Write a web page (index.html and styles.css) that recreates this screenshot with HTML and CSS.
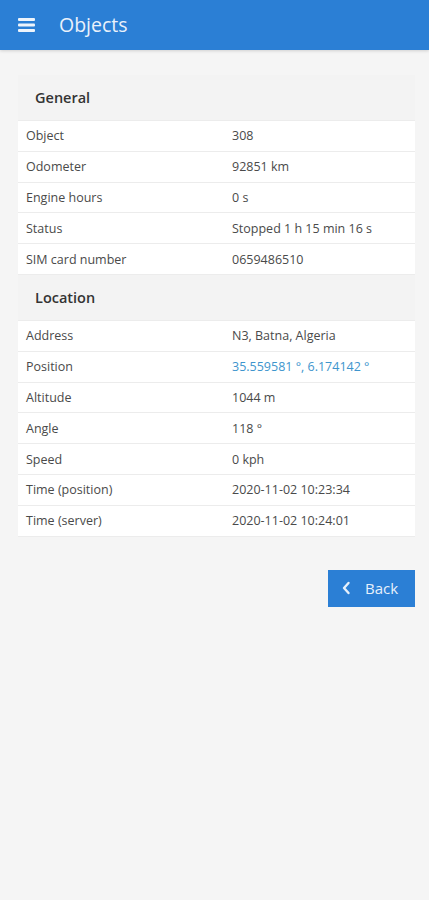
FILE: index.html
```html
<!DOCTYPE html>
<html>
<head>
<meta charset="utf-8">
<link rel="stylesheet" href="styles.css">
</head>
<body>
<header class="topbar">
  <svg class="menu-icon" width="17" height="14" viewBox="0 0 17 14"><rect x="0" y="0" width="17" height="3" rx="1"/><rect x="0" y="5.5" width="17" height="3" rx="1"/><rect x="0" y="11" width="17" height="3" rx="1"/></svg>
  <span class="title">Objects</span>
</header>
<main class="content">
  <section class="card">
    <div class="section-head">General</div>
    <div class="row"><span class="label">Object</span><span class="value">308</span></div>
    <div class="row"><span class="label">Odometer</span><span class="value">92851 km</span></div>
    <div class="row"><span class="label">Engine hours</span><span class="value">0 s</span></div>
    <div class="row"><span class="label">Status</span><span class="value">Stopped 1 h 15 min 16 s</span></div>
    <div class="row"><span class="label">SIM card number</span><span class="value">0659486510</span></div>
    <div class="section-head">Location</div>
    <div class="row"><span class="label">Address</span><span class="value">N3, Batna, Algeria</span></div>
    <div class="row"><span class="label">Position</span><span class="value link">35.559581 °, 6.174142 °</span></div>
    <div class="row"><span class="label">Altitude</span><span class="value">1044 m</span></div>
    <div class="row"><span class="label">Angle</span><span class="value">118 °</span></div>
    <div class="row"><span class="label">Speed</span><span class="value">0 kph</span></div>
    <div class="row"><span class="label">Time (position)</span><span class="value">2020-11-02 10:23:34</span></div>
    <div class="row"><span class="label">Time (server)</span><span class="value">2020-11-02 10:24:01</span></div>
  </section>
  <div class="actions">
    <button class="back-btn">
      <svg width="10" height="14" viewBox="0 0 10 14"><path d="M7.5 2 L3 7 L7.5 12" fill="none" stroke="currentColor" stroke-width="2.4" stroke-linecap="round" stroke-linejoin="round"/></svg>
      <span>Back</span>
    </button>
  </div>
</main>
</body>
</html>
```

FILE: styles.css
```css
* { box-sizing: border-box; }
html, body { margin: 0; padding: 0; }
body {
  background: #f5f5f5;
  font-family: "Open Sans", "Noto Sans", sans-serif;
  color: #444;
  width: 429px;
  min-height: 900px;
}
.topbar {
  height: 50px;
  background: #2b7fd5;
  display: flex;
  align-items: center;
  padding-left: 18px;
  box-shadow: 0 1px 3px rgba(0,0,0,0.15);
}
.menu-icon { fill: #eef4fb; }
.title {
  margin-left: 24px;
  color: #e9f1fb;
  font-size: 19.5px;
  font-weight: 400;
  position: relative;
  top: -1px;
}
.content {
  padding: 25px 14px 0 18px;
}
.card {
  background: #f2f2f2;
}
.section-head {
  height: 46px;
  display: flex;
  align-items: center;
  padding-left: 17px;
  font-size: 14.5px;
  font-weight: 600;
  color: #333;
  background: #f3f3f3;
  border-bottom: 1px solid #ececec;
}
.row {
  height: 30.8px;
  display: flex;
  align-items: center;
  background: #fff;
  border-bottom: 1px solid #ececec;
  font-size: 12.5px;
  color: #4a4a4a;
}
.label { width: 214px; padding-left: 8px; }
.value { flex: 1; }
.link { color: #3e95cd; }
.actions {
  display: flex;
  justify-content: flex-end;
  margin-top: 33px;
}
.back-btn {
  width: 87px;
  height: 37px;
  background: #2b7fd5;
  border: none;
  color: #e6f0fb;
  font-family: "Open Sans", "Noto Sans", sans-serif;
  font-size: 15px;
  display: flex;
  align-items: center;
  justify-content: center;
  gap: 14px;
  padding: 0 4px 0 0;
}
.back-btn svg { color: #e6f0fb; }
```
